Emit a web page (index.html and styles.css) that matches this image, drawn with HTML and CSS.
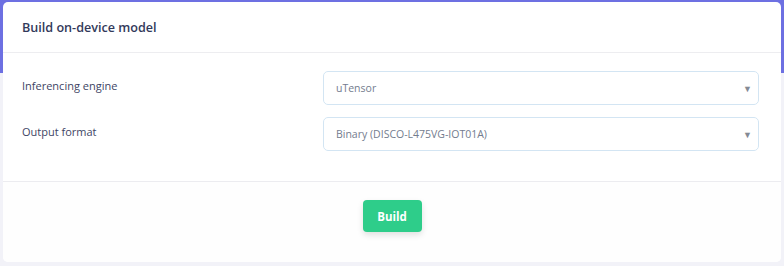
FILE: index.html
```html
<!DOCTYPE html>
<html lang="en">
<head>
  <meta charset="UTF-8" />
  <title>Build on-device model</title>
  <link rel="stylesheet" href="styles.css">
</head>
<body>
  <div class="card">
    <div class="card-header">Build on-device model</div>
    <div class="card-body">
      <div class="form-row">
        <label for="engine">Inferencing engine</label>
        <div class="select-wrap">
          <select id="engine">
            <option>uTensor</option>
          </select>
          <span class="caret">▼</span>
        </div>
      </div>
      <div class="form-row">
        <label for="format">Output format</label>
        <div class="select-wrap">
          <select id="format">
            <option>Binary (DISCO-L475VG-IOT01A)</option>
          </select>
          <span class="caret">▼</span>
        </div>
      </div>
    </div>
    <div class="card-footer">
      <button class="btn-build">Build</button>
    </div>
  </div>
</body>
</html>
```

FILE: styles.css
```css
:root {
  --purple: #6d70e2;
  --page-bg: #f2f2f8;
  --title: #32395a;
  --label: #3e4564;
  --muted: #737c8e;
  --green: #2ecd8a;
}

html, body {
  margin: 0;
  padding: 0;
}

body {
  font-family: 'Open Sans', sans-serif;
  background: linear-gradient(var(--purple) 0 73px, var(--page-bg) 73px);
  min-height: 266px;
  padding: 2px 3px 0 3px;
  box-sizing: border-box;
}

.card {
  background: #fff;
  border-radius: 5px;
  overflow: hidden;
}

.card-header {
  height: 50px;
  display: flex;
  align-items: center;
  padding: 0 19px;
  font-size: 12.6px;
  font-weight: 600;
  color: var(--title);
  border-bottom: 1px solid #ededf0;
}

.card-body {
  padding: 18px 22px 30px 19px;
  display: flex;
  flex-direction: column;
  gap: 12px;
  border-bottom: 1px solid #ececf0;
}

.form-row {
  display: grid;
  grid-template-columns: 301px 1fr;
  align-items: start;
}

.form-row label {
  font-size: 11px;
  color: var(--label);
  padding-top: 7px;
}

.select-wrap {
  position: relative;
}

.select-wrap select {
  appearance: none;
  -webkit-appearance: none;
  width: 100%;
  height: 34px;
  padding: 0 24px 0 12px;
  font-family: inherit;
  font-size: 10.5px;
  color: var(--muted);
  background: #fff;
  border: 1px solid #d3e5f3;
  border-radius: 5px;
  outline: none;
}

.caret {
  position: absolute;
  right: 7px;
  top: 11px;
  font-size: 9px;
  color: #858a94;
  pointer-events: none;
}

.card-footer {
  background: #fefefe;
  padding: 18px 0 30px;
  display: flex;
  justify-content: center;
}

.btn-build {
  background: var(--green);
  color: #fff;
  border: none;
  border-radius: 4px;
  width: 59px;
  height: 32px;
  font-family: inherit;
  font-size: 11.5px;
  font-weight: 700;
  box-shadow: 0 3px 6px rgba(0, 0, 0, 0.12);
  cursor: pointer;
}
```
